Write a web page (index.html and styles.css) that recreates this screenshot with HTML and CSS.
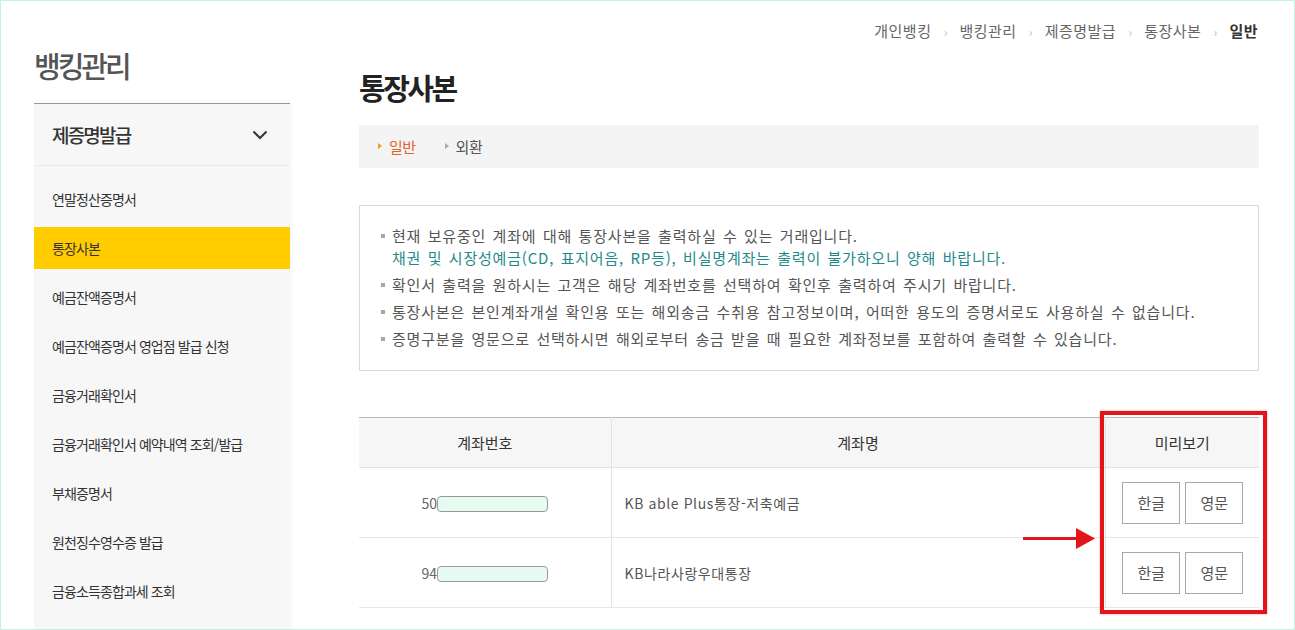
FILE: index.html
```html
<!DOCTYPE html>
<html lang="ko">
<head>
  <meta charset="UTF-8">
  <title>통장사본 - 제증명발급</title>
  <link rel="stylesheet" href="styles.css">
</head>
<body>
<div class="frame">
  <div class="page">

    <!-- 왼쪽 메뉴 -->
    <aside class="sidebar">
      <h2 class="side-title">뱅킹관리</h2>
      <div class="menu">
        <div class="menu-head">
          <span>제증명발급</span>
          <svg class="chevron" width="16" height="10" viewBox="0 0 16 10">
            <polyline points="1.5,1.5 8,8 14.5,1.5" fill="none" stroke="#333" stroke-width="2"/>
          </svg>
        </div>
        <ul class="menu-list">
          <li>연말정산증명서</li>
          <li class="active">통장사본</li>
          <li>예금잔액증명서</li>
          <li>예금잔액증명서 영업점 발급 신청</li>
          <li>금융거래확인서</li>
          <li>금융거래확인서 예약내역 조회/발급</li>
          <li>부채증명서</li>
          <li>원천징수영수증 발급</li>
          <li>금융소득종합과세 조회</li>
        </ul>
      </div>
    </aside>

    <!-- 본문 -->
    <main class="main">
      <div class="breadcrumb">
        <span>개인뱅킹</span><span class="sep">›</span><span>뱅킹관리</span><span class="sep">›</span><span>제증명발급</span><span class="sep">›</span><span>통장사본</span><span class="sep">›</span><strong>일반</strong>
      </div>

      <h1 class="page-title">통장사본</h1>

      <div class="tabs">
        <span class="tab on">일반</span>
        <span class="tab">외환</span>
      </div>

      <div class="notice">
        <ul>
          <li>현재 보유중인 계좌에 대해 통장사본을 출력하실 수 있는 거래입니다.<br>
            <span class="teal">채권 및 시장성예금(CD, 표지어음, RP등), 비실명계좌는 출력이 불가하오니 양해 바랍니다.</span></li>
          <li>확인서 출력을 원하시는 고객은 해당 계좌번호를 선택하여 확인후 출력하여 주시기 바랍니다.</li>
          <li>통장사본은 본인계좌개설 확인용 또는 해외송금 수취용 참고정보이며, 어떠한 용도의 증명서로도 사용하실 수 없습니다.</li>
          <li>증명구분을 영문으로 선택하시면 해외로부터 송금 받을 때 필요한 계좌정보를 포함하여 출력할 수 있습니다.</li>
        </ul>
      </div>

      <div class="table-wrap">
        <table class="acct-table">
          <colgroup>
            <col class="c-no">
            <col class="c-name">
            <col class="c-view">
          </colgroup>
          <thead>
            <tr>
              <th>계좌번호</th>
              <th>계좌명</th>
              <th>미리보기</th>
            </tr>
          </thead>
          <tbody>
            <tr>
              <td class="no">50<span class="mask"></span></td>
              <td class="name">KB able Plus통장-저축예금</td>
              <td><div class="btns"><button>한글</button><button>영문</button></div></td>
            </tr>
            <tr>
              <td class="no">94<span class="mask"></span></td>
              <td class="name">KB나라사랑우대통장</td>
              <td><div class="btns"><button>한글</button><button>영문</button></div></td>
            </tr>
          </tbody>
        </table>

        <!-- 강조 표시 -->
        <div class="highlight"></div>
        <svg class="arrow" width="76" height="24" viewBox="0 0 76 24">
          <rect x="2" y="10" width="54" height="3" fill="#e3151a"/>
          <polygon points="55,1 74,11.5 55,22" fill="#e3151a"/>
        </svg>
      </div>
    </main>

  </div>
</div>
</body>
</html>
```

FILE: styles.css
```css
* {
  margin: 0;
  padding: 0;
  box-sizing: border-box;
}

body {
  background: #fff;
  height: 630px;
  overflow: hidden;
  font-family: "Noto Sans CJK KR", "Noto Sans", sans-serif;
  color: #333;
}

.frame {
  height: 630px;
  border: 1px solid #c4f2e3;
}

.page {
  display: flex;
  height: 100%;
  padding-left: 33px;
}

/* 왼쪽 메뉴 */
.sidebar {
  width: 256px;
  display: flex;
  flex-direction: column;
  padding-top: 46px;
}

.side-title {
  font-size: 29px;
  font-weight: 500;
  line-height: 36px;
  letter-spacing: -3px;
  color: #555;
  margin-bottom: 20px;
}

.menu {
  flex: 1;
  background: #f7f7f7;
  border-top: 1px solid #999;
  box-shadow: 2px 0 4px rgba(0, 0, 0, 0.03);
}

.menu-head {
  height: 62px;
  display: flex;
  align-items: center;
  justify-content: space-between;
  padding: 0 22px 0 18px;
  border-bottom: 1px solid #e9e9e9;
  font-size: 19px;
  font-weight: 500;
  letter-spacing: -1.8px;
  color: #333;
}

.menu-list {
  list-style: none;
  padding-top: 12px;
}

.menu-list li {
  height: 42px;
  line-height: 42px;
  margin-bottom: 7px;
  padding-left: 18px;
  font-size: 14px;
  letter-spacing: -0.9px;
  color: #333;
}

.menu-list li.active {
  background: #ffcc00;
}

/* 본문 */
.main {
  width: 900px;
  margin-left: 69px;
  padding-top: 20px;
}

.breadcrumb {
  text-align: right;
  font-size: 15px;
  line-height: 20px;
  color: #666;
  padding-right: 1px;
}

.breadcrumb span,
.breadcrumb strong {
  letter-spacing: 0.5px;
}

.breadcrumb .sep {
  display: inline-block;
  width: 28px;
  text-align: center;
  font-size: 12px;
  letter-spacing: 0;
  color: #bbb;
}

.breadcrumb strong {
  color: #333;
  font-weight: 700;
}

.page-title {
  margin-top: 28px;
  font-size: 29px;
  line-height: 34px;
  font-weight: 700;
  letter-spacing: -2.5px;
  color: #222;
}

.tabs {
  margin-top: 21px;
  height: 43px;
  background: #f4f4f4;
  display: flex;
  align-items: center;
  padding-left: 19px;
  gap: 29px;
}

.tab {
  position: relative;
  padding-left: 11px;
  font-size: 15px;
  letter-spacing: -0.5px;
  color: #555;
}

.tab::before {
  content: "";
  position: absolute;
  left: 0;
  top: 50%;
  margin-top: -4px;
  border-left: 4px solid #aaa;
  border-top: 3.5px solid transparent;
  border-bottom: 3.5px solid transparent;
}

.tab.on {
  color: #e2652c;
}

.tab.on::before {
  border-left-color: #f39c1f;
}

.notice {
  margin-top: 37px;
  height: 166px;
  border: 1px solid #d9d9d9;
  padding: 19px 20px 0 21px;
}

.notice ul {
  list-style: none;
}

.notice li {
  position: relative;
  padding-left: 11px;
  margin-bottom: 5px;
  font-size: 15px;
  line-height: 22px;
  letter-spacing: 0.8px;
  word-spacing: 1.5px;
  color: #555;
}

.notice li::before {
  content: "";
  position: absolute;
  left: 0;
  top: 9px;
  width: 4px;
  height: 4px;
  background: #a5a5a5;
}

.notice .teal {
  color: #1f8a8c;
}

/* 계좌 목록 */
.table-wrap {
  position: relative;
  margin-top: 46px;
}

.acct-table {
  width: 900px;
  table-layout: fixed;
  border-collapse: collapse;
  border-top: 1px solid #b8b8b8;
}

.c-no { width: 252px; }
.c-name { width: 494px; }
.c-view { width: 154px; }

.acct-table th {
  height: 50px;
  background: #f6f6f6;
  font-size: 15px;
  font-weight: 400;
  color: #333;
  border-bottom: 1px solid #e3e3e3;
}

.acct-table td {
  height: 70px;
  border-bottom: 1px solid #e6e6e6;
  text-align: center;
  font-size: 14px;
  color: #555;
}

.acct-table th + th,
.acct-table td + td {
  border-left: 1px solid #e3e3e3;
}

.acct-table td.name {
  text-align: left;
  padding-left: 13px;
  letter-spacing: 0.6px;
}

.acct-table td.no {
  color: #666;
}

.mask {
  display: inline-block;
  vertical-align: -3px;
  width: 111px;
  height: 16px;
  background: #e8fbf3;
  border: 1px solid #9a9a9a;
  border-radius: 4px;
}

.btns {
  display: flex;
  justify-content: center;
  gap: 5px;
  padding-left: 1px;
}

.btns button {
  width: 58px;
  height: 42px;
  background: #fff;
  border: 1px solid #a8a8a8;
  font-family: inherit;
  font-size: 15px;
  color: #555;
}

.highlight {
  position: absolute;
  left: 741px;
  top: -6px;
  width: 167px;
  height: 203px;
  border: 4px solid #e3151a;
  box-shadow: 0 0 2px rgba(227, 21, 26, 0.4);
}

.arrow {
  position: absolute;
  left: 662px;
  top: 110px;
}
```
